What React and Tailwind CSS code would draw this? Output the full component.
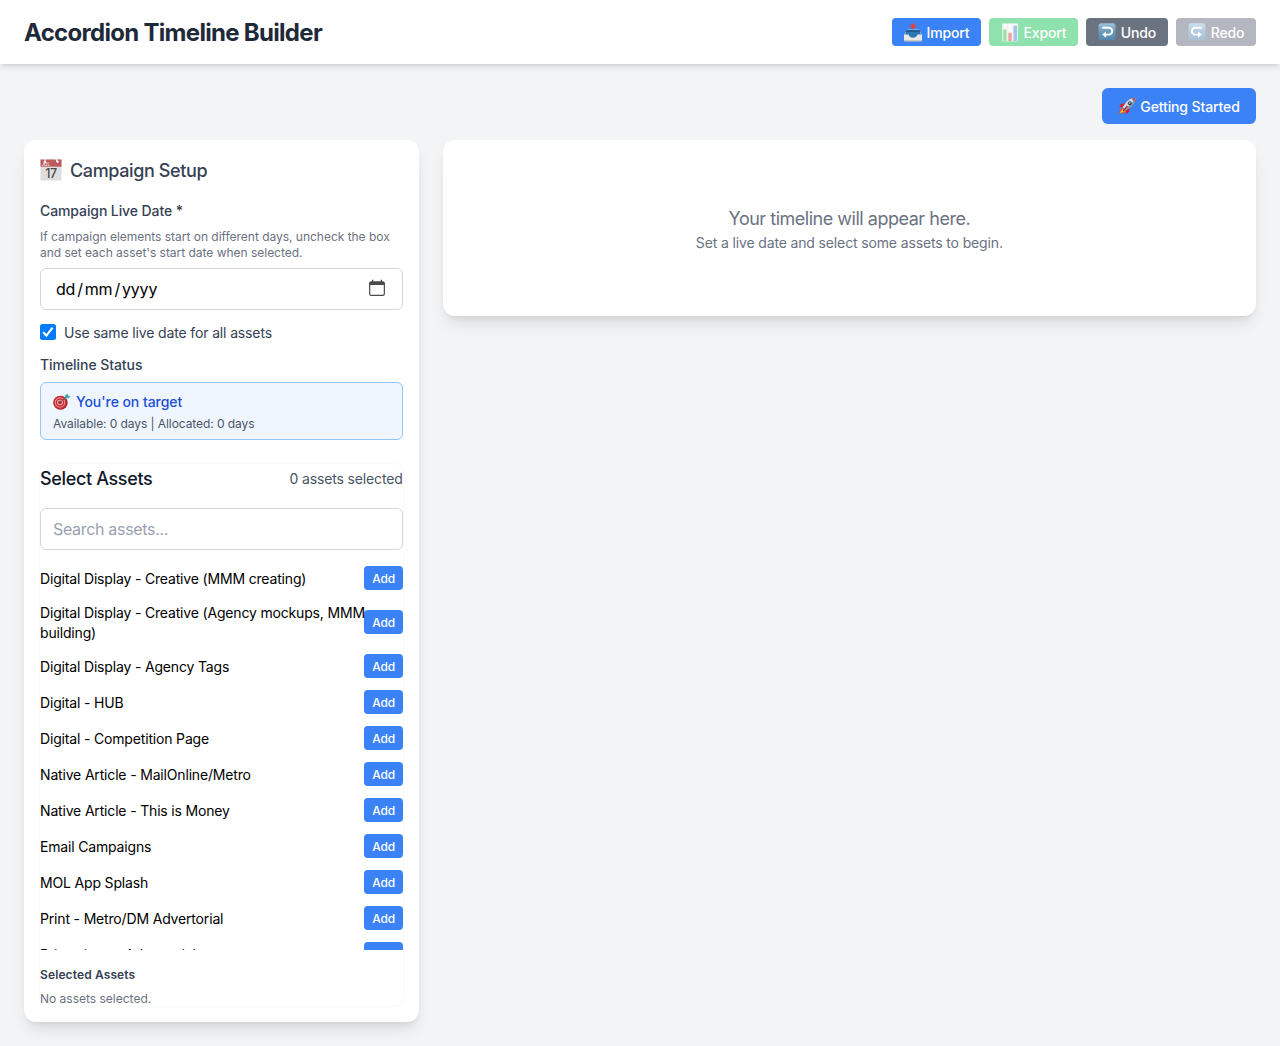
import { useState } from "react";

const assets = [
  "Digital Display - Creative (MMM creating)",
  "Digital Display - Creative (Agency mockups, MMM\nbuilding)",
  "Digital Display - Agency Tags",
  "Digital - HUB",
  "Digital - Competition Page",
  "Native Article - MailOnline/Metro",
  "Native Article - This is Money",
  "Email Campaigns",
  "MOL App Splash",
  "Print - Metro/DM Advertorial",
  "Print - inews Advertorial",
];

function InboxIcon() {
  return (
    <svg className="h-[19px] w-[18px] shrink-0" viewBox="0 0 18 19">
      <path d="M3 6.5h12l2.8 5H.2z" fill="#b9cfe0" />
      <path d="M2.600 7h12.800l1.600 5-3.800 3H4.800L1 12z" fill="#2c76b4" />
      <path d="M2.600 7h12.800l.8 2H1.800z" fill="#1f5d92" />
      <path d="M0 11.5h4.6c.3 2 2 3.2 4.4 3.2s4.100-1.200 4.400-3.200H18v5.700c0 .6-.4 1-1 1H1c-.6 0-1-.4-1-1z" fill="#e9e8e6" />
      <path d="M0 17h18v.4c0 .5-.4.8-1 .8H1c-.6 0-1-.3-1-.8z" fill="#c9c6bc" />
      <path d="M7.300.6h3.400v2.300h2L9 6.200 5.300 2.900h2z" fill="#ef3e3a" />
    </svg>
  );
}

function ChartIcon() {
  return (
    <svg className="h-[19px] w-[18px] shrink-0" viewBox="0 0 18 19">
      <rect x="1.300" y=".5" width="15.500" height="17.800" fill="#f4f7fa" />
      <path d="M1.300 5h15.500M1.300 9.500h15.500M1.300 14h15.500M6.500.5v17.800M11.700.5v17.800" stroke="#d4dde4" strokeWidth=".5" />
      <rect x="2.200" y="6.500" width="3.400" height="11.500" fill="#43c44c" />
      <rect x="7.300" y="9.800" width="3.500" height="8.200" fill="#d84a4e" />
      <rect x="12.500" y="2.600" width="3.500" height="15.400" fill="#4b86cf" />
    </svg>
  );
}

function ArrowTile({ flip }) {
  return (
    <svg className="h-[18px] w-[18px] shrink-0" viewBox="0 0 18 18">
      <defs>
        <linearGradient id={flip ? "tileB" : "tileA"} x1="0" y1="0" x2="0" y2="1">
          <stop offset="0" stopColor="#9cc4df" />
          <stop offset=".45" stopColor="#6e9cbf" />
          <stop offset="1" stopColor="#5585ab" />
        </linearGradient>
      </defs>
      <rect x=".5" y=".3" width="17" height="17" rx="2.500" fill={flip ? "url(#tileB)" : "url(#tileA)"} />
      <g transform={flip ? "matrix(-1 0 0 1 18 0)" : undefined}>
        <path d="M4.200 4.800h6.600a3.400 3.400 0 0 1 0 6.800H7.500" fill="none" stroke="#fff" strokeWidth="1.900" />
        <path d="M8 8.500v6.200L4 11.600z" fill="#fff" />
      </g>
    </svg>
  );
}

function RocketIcon() {
  return (
    <svg className="h-[18px] w-[18px] shrink-0" viewBox="0 0 18 18">
      <path d="M5 10.500 1 12.500l1.500.5L.3 16.800l4-1.300-.3 1.500 4-2.300z" fill="#f4571c" />
      <path d="M4.500 12 2 16 6.800 14.200z" fill="#ffd23c" />
      <path d="M7.500 6.300 3.300 6.800 1.200 10.300l4-.6zM11.700 10.500l-.5 4.200-3.500 2.500.5-4.200z" fill="#cf2424" />
      <path d="M17.300.7C12.500.8 8.500 3.300 4.800 10.300l2.900 2.900c7-3.700 9.500-7.700 9.600-12.500z" fill="#d4dbe2" />
      <path d="M17.300.7c-.1 4.800-2.600 8.800-9.600 12.500l-1.300-1.300C11.500 9 14.500 6 17.300.7z" fill="#8593a1" />
      <path d="M17.300.7c-1.500 0-2.800.3-4 .8l3.200 3.200c.5-1.200.8-2.500.8-4z" fill="#b05a5a" />
      <circle cx="11.800" cy="6.200" r="2" fill="#333f4b" />
      <circle cx="11.600" cy="6" r="1" fill="#7fb3da" />
      <path d="m9 8.500 1 .8-4.700 5.200-.8-.8z" fill="#a92020" />
    </svg>
  );
}

function CalendarIcon() {
  return (
    <svg className="relative left-[-0.5px] h-[22px] w-[22px] shrink-0" viewBox="0 0 22 22">
      <rect x=".5" y=".5" width="21" height="21" fill="#dedede" />
      <path d="M.5.5h21v7.200H.5z" fill="#bd5b5c" />
      <path d="M5 0v3M16 0l1.500 3" stroke="#fff" strokeWidth="1.200" strokeLinecap="round" />
      <circle cx="5" cy="3.200" r="1.200" fill="#fff" />
      <circle cx="17.500" cy="2.600" r="1.200" fill="#fff" />
      <text x="1.500" y="6.900" fontSize="4.500" fill="#f2dcdc" fontFamily="Inter, sans-serif" fontWeight="600">JUL</text>
      <text x="11" y="19.200" fontSize="12.500" textAnchor="middle" fill="#474747" fontFamily="Inter, sans-serif" fontWeight="500" letterSpacing="-.5">17</text>
    </svg>
  );
}

function TargetIcon() {
  return (
    <svg className="relative top-px h-[18px] w-[18px] shrink-0" viewBox="0 0 18 18">
      <ellipse cx="7.500" cy="9.700" rx="7.200" ry="7" fill="#a92128" />
      <ellipse cx="7" cy="9.500" rx="6.600" ry="6.500" fill="#cf3035" />
      <circle cx="7" cy="9.500" r="5" fill="#e5b5b3" />
      <circle cx="7" cy="9.500" r="4.300" fill="#c82b32" />
      <circle cx="7" cy="9.500" r="2.800" fill="#eccfcd" />
      <circle cx="7" cy="9.500" r="1.900" fill="#c22730" />
      <path d="m7 9.500 7-6" stroke="#7b4a46" strokeWidth="1" />
      <path d="m11.500 5.500.3-2.900L14.700.5l.5 2 2.500.7-2.400 2.200z" fill="#58b3b6" />
      <path d="m11.500 5.500 3.700-3" stroke="#2f7f88" strokeWidth=".8" />
    </svg>
  );
}

function PickerIcon() {
  return (
    <svg className="relative -top-px h-[18px] w-4 shrink-0" viewBox="0 0 16 18">
      <rect x=".65" y="3.150" width="14.700" height="13.200" rx="1.600" fill="none" stroke="#4a4a4a" strokeWidth="1.200" />
      <path d="M1.500 2.500h13l1 1v2.500H.5V3.500zM3 .8h1.300v2.500H3zM11.700.8H13v2.500h-1.300z" fill="#4a4a4a" />
    </svg>
  );
}

function ToolbarButton({ className, icon, children }) {
  return (
    <button className={"flex h-7 items-center justify-center gap-[5px] rounded-[4px] text-sm font-medium tracking-[-0.15px] text-white " + className}>
      {icon}
      <span className="relative top-px">{children}</span>
    </button>
  );
}

export default function App() {
  const [same, setSame] = useState(true);
  return (
    <div className="min-h-[1046px] bg-[#f3f4f6] font-['Inter',sans-serif] text-black">
      <header className="flex h-16 items-center justify-between bg-white px-6 shadow-md">
        <h1 className="relative top-px text-2xl font-bold tracking-[-0.7px] whitespace-nowrap text-gray-800">Accordion Timeline Builder</h1>
        <div className="flex gap-2">
          <ToolbarButton className="w-[89px] bg-[#3b82f6]" icon={<InboxIcon />}>Import</ToolbarButton>
          <ToolbarButton className="w-[89px] bg-[#22c55e] opacity-50" icon={<ChartIcon />}>Export</ToolbarButton>
          <ToolbarButton className="w-[82px] bg-[#6b7280]" icon={<ArrowTile />}>Undo</ToolbarButton>
          <ToolbarButton className="w-20 bg-[#6b7280] opacity-50" icon={<ArrowTile flip />}>Redo</ToolbarButton>
        </div>
      </header>

      <main className="p-6">
        <div className="mb-4 flex justify-end">
          <button className="flex h-9 w-[154px] items-center justify-center gap-1 rounded-md bg-[#3b82f6] text-sm font-medium tracking-[-0.12px] whitespace-nowrap text-white">
            <RocketIcon />
            <span className="relative top-px">Getting Started</span>
          </button>
        </div>

        <div className="grid grid-cols-3 items-start gap-6">
          <section className="rounded-xl bg-white p-4 shadow-lg">
            <h2 className="mb-4 flex h-7 items-center gap-2 text-lg font-medium text-gray-700">
              <CalendarIcon />
              <span className="relative top-px tracking-[-0.38px]">Campaign Setup</span>
            </h2>
            <label className="relative top-px mb-2 block text-sm font-medium tracking-[-0.1px] text-gray-700">Campaign Live Date *</label>
            <p className="relative top-px mb-2 text-xs tracking-[-0.02px] whitespace-nowrap text-gray-500">
              If campaign elements start on different days, uncheck the box<br />
              and set each asset's start date when selected.
            </p>
            <div className="flex h-[42px] items-center justify-between rounded-md border border-gray-300 pr-[17px] pl-[15px]">
              <span className="text-base tracking-[-0.2px]">
                dd<span className="px-[2px]">/</span>mm<span className="px-[2px]">/</span>yyyy
              </span>
              <PickerIcon />
            </div>
            <label className="mt-3 flex h-5 items-center gap-2 text-sm tracking-[-0.14px] text-gray-700">
              <input type="checkbox" checked={same} onChange={() => setSame(!same)} className="peer sr-only" />
              <span className="flex h-4 w-4 items-center justify-center rounded-[2.500px] bg-[#007aff]">
                <svg className="h-4 w-4" viewBox="0 0 16 16" fill="none" stroke="#fff" strokeWidth="2.100">
                  <path d="m3.200 8.300 3.200 3.300 6.200-7.900" />
                </svg>
              </span>
              <span className="relative top-px">Use same live date for all assets</span>
            </label>
            <div className="mt-3 mb-2 text-sm font-medium tracking-[-0.06px] text-gray-700"><span className="relative top-px">Timeline Status</span></div>
            <div className="h-[58px] rounded-md border border-[#93c5fd] bg-[#eff6ff] px-3 py-2">
              <div className="flex h-5 items-center gap-[5px] text-sm font-medium tracking-[-0.06px] text-[#1d4ed8]">
                <TargetIcon />
                <span className="relative top-px">You're on target</span>
              </div>
              <div className="mt-1 text-xs tracking-[-0.07px] text-gray-600"><span className="relative top-px">Available: 0 days | Allocated: 0 days</span></div>
            </div>

            <div className="mt-6 rounded-lg bg-white shadow-[0_0_2px_rgba(0,0,0,0.08)]">
              <div className="mb-4 flex h-7 items-center justify-between">
                <h3 className="text-lg font-medium tracking-[-0.35px] text-gray-900"><span className="relative top-px">Select Assets</span></h3>
                <span className="relative top-px text-sm tracking-[-0.15px] text-gray-600">0 assets selected</span>
              </div>
              <input placeholder="Search assets..." className="mb-4 block h-[42px] w-full rounded-md border border-gray-300 px-3 text-base tracking-[-0.32px] placeholder:text-gray-400" />
              <div className="flex max-h-96 flex-col gap-3 overflow-hidden">
                {assets.map((name) => (
                  <div key={name} className="flex shrink-0 items-center justify-between">
                    <span className="relative top-px min-w-0 flex-1 text-sm tracking-[-0.17px] whitespace-pre">{name}</span>
                    <button className="h-6 w-[39px] shrink-0 rounded-[4px] bg-[#3b82f6] text-xs font-medium tracking-[-0.1px] text-white">
                      <span className="relative top-px left-[0.5px]">Add</span>
                    </button>
                  </div>
                ))}
              </div>
              <h4 className="mt-4 mb-2 text-xs font-semibold tracking-[0.12px] text-gray-700"><span className="relative top-px">Selected Assets</span></h4>
              <p className="text-xs text-gray-500"><span className="relative top-px">No assets selected.</span></p>
            </div>
          </section>

          <section className="col-span-2 flex h-44 flex-col items-center justify-center rounded-xl bg-white text-gray-500 shadow-lg">
            <p className="text-lg leading-7 tracking-[-0.48px]"><span className="relative top-px">Your timeline will appear here.</span></p>
            <p className="text-sm tracking-[-0.14px]"><span className="relative top-px">Set a live date and select some assets to begin.</span></p>
          </section>
        </div>
      </main>
    </div>
  );
}
